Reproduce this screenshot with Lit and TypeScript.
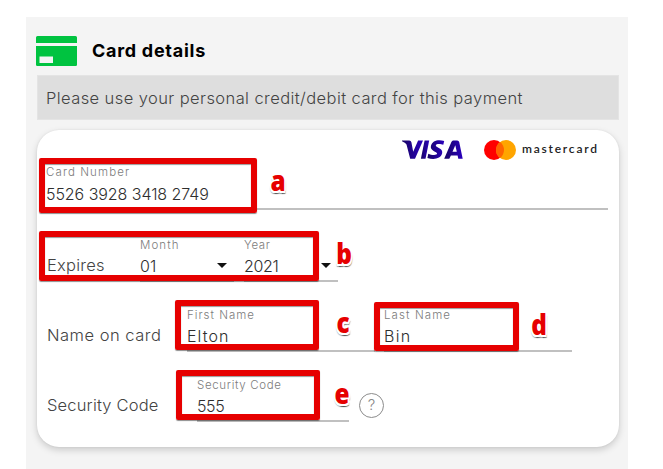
import { LitElement, html, css, svg } from "lit";
import { customElement, property } from "lit/decorators.js";

@customElement("form-field")
class FormField extends LitElement {
  @property() label = "";
  @property() value = "";
  @property({ type: Boolean }) select = false;

  static styles = css`
    :host { display: block; box-sizing: border-box; border-bottom: 2px solid #c0c0c0; position: relative; height: 46px; }
    .label { font-size: 11.5px; line-height: 16px; padding-top: var(--label-top, 1px); font-weight: 350; color: #7c7c7c; white-space: nowrap; letter-spacing: var(--label-spacing, 0.9px); }
    .value { font-size: 16px; line-height: 22px; font-weight: 350; color: #2e2e2e; margin-top: var(--value-gap, 1.5px); white-space: nowrap; letter-spacing: var(--value-spacing, 0); }
    .arrow { position: absolute; right: 7px; top: 27px; border: 5px solid transparent; border-top-color: #111; border-bottom: 0; }
  `;

  render() {
    return html`
      <div class="label">${this.label}</div>
      <div class="value">${this.value}</div>
      ${this.select ? html`<span class="arrow"></span>` : ""}
    `;
  }
}

@customElement("app-root")
class AppRoot extends LitElement {
  static styles = css`
    :host { display: block; position: relative; height: 469px; overflow: hidden; background: #fff; font-family: "Inter", "Liberation Sans", sans-serif; color: #434343; }
    * { box-sizing: border-box; }
    .panel { margin: 17px 35px 0 26px; height: 452px; background: #f4f4f4; padding: 19px 9px 0 10px; }
    .heading { display: flex; align-items: center; height: 30px; gap: 15px; }
    .heading svg { display: block; }
    h1 { margin: 0; font-size: 18px; line-height: 30px; font-weight: 700; color: #000; letter-spacing: 0.72px; }
    .notice { margin: 9px 0 0 1px; height: 45px; background: #dedede; border: 1px solid #e4e4e4; padding: 1px 0 0 8px; font-size: 16.5px; font-weight: 350; line-height: 43px; letter-spacing: 0.415px; white-space: nowrap; }
    .card { margin: 10px 0 0 1px; height: 317px; border-radius: 22px; background: #fff; box-shadow: 0 3px 7px rgba(0,0,0,.17), 0 0 2px rgba(0,0,0,.08); padding: 8px 11px 0 9px; }
    .brands { display: flex; justify-content: flex-end; height: 26px; }
    .row { display: flex; height: 46px; }
    .number { margin-bottom: 26px; --label-top: 0px; --label-spacing: 1.1px; --value-spacing: -.06px; --value-gap: 3px; }
    .number form-field { flex: 1; }
    .expires { margin-bottom: 24px; }
    .name { margin-bottom: 24px; }
    .caption { font-size: 16.5px; font-weight: 350; line-height: 22px; padding: 18px 0 0 1px; white-space: nowrap; flex: none; }
    .expires .caption { width: 94px; letter-spacing: .25px; }
    .name .caption { width: 141px; letter-spacing: .5px; }
    .security .caption { width: 151px; letter-spacing: .17px; }
    .month { width: 94px; margin-right: 10px; --label-spacing: 1.1px; }
    .year { width: 94px; --label-spacing: .6px; --value-spacing: -.3px; }
    .first { width: 188px; margin-right: 9px; --label-spacing: 1px; --value-spacing: 1.1px; }
    .last { width: 188px; --label-spacing: 1.1px; --value-spacing: 1.3px; }
    .code { width: 152px; margin-right: 10px; --label-spacing: .65px; --value-spacing: -.4px; }
    .help { width: 25px; height: 25px; border: 1.5px solid #8c8c8c; border-radius: 50%; margin-top: 17px; font-size: 15px; font-weight: 350; line-height: 22px; text-align: center; color: #888; }
    .mark { position: absolute; border: 6px solid #e60000; border-radius: 2px; box-shadow: 0 1px 1px rgba(0,0,0,.45), inset 0 1px 1px rgba(0,0,0,.4); }
    .mark-a { left: 39px; top: 158px; width: 218px; height: 55px; }
    .mark-b { left: 39px; top: 231px; width: 280px; height: 50px; }
    .mark-c { left: 175px; top: 300px; width: 144px; height: 50px; }
    .mark-d { left: 374px; top: 302px; width: 145px; height: 49px; }
    .mark-e { left: 176px; top: 370px; width: 144px; height: 50px; }
    .letter { position: absolute; width: 30px; text-align: center; font: 800 29px/30px "Open Sans", sans-serif; color: #e60000; transform: scaleX(.84);
      text-shadow: -2px 0 #fff, 2px 0 #fff, 0 -2px #fff, 0 2px #fff, 1.5px 1.5px #fff, -1.5px 1.5px #fff, 1.5px -1.5px #fff, 1.5px 2.5px 1px rgba(0,0,0,.55), -1px 2.5px 1px rgba(0,0,0,.35); }
    .letter-a { left: 263px; top: 165px; }
    .letter-b { left: 329px; top: 238px; }
    .letter-c { left: 328px; top: 307px; }
    .letter-d { left: 524px; top: 309px; }
    .letter-e { left: 327px; top: 378px; }
    .brand-name { font: 600 12px "Lato", sans-serif; }
  `;

  render() {
    const brands = svg`
      <defs><linearGradient id="visa-blue"><stop offset="0" stop-color="#180563"/><stop offset="1" stop-color="#2a00bd"/></linearGradient></defs>
      <g fill="url(#visa-blue)" transform="translate(2 2)">
        <path d="M0 .5H7.2Q9 .5 9.4 2.3L11.2 11.8L16.1.5H21L13 18.8H8.2L4.5 4.4Q4 3 0 1.3Z"/>
        <path d="M22.6.5H27.2L23.5 18.8H18.9Z"/>
        <path d="M42.2 1L41.3 4.8C38.8 3.8 34.2 3.3 33.8 5.5C33.5 7.6 41.3 8 40.2 13.1C38.9 19.2 31.2 20 25.4 17.9L26.3 13.8C29.2 15.2 34.9 15.8 35.1 13.6C35.3 11.6 27.8 11 28.9 6C30.1.2 37-.8 42.2 1Z"/>
        <path fill-rule="evenodd" d="M51.1.5H55.2Q56.8.5 57.2 2L60.7 18.8H56.3L55.6 15.4H48.9L47.3 18.8H42.2L49.4 2Q50 .5 51.1.5ZM53.3 5.2L50.5 11.7H54.8Z"/>
      </g>
      <circle cx="94" cy="12" r="10" fill="#ff0000"/>
      <circle cx="106" cy="12" r="10" fill="#ffa500"/>
      <path d="M100 4A10 10 0 0 1 100 20A10 10 0 0 1 100 4Z" fill="#ff6300"/>
      <text class="brand-name" x="122" y="15" fill="#222" textLength="75" lengthAdjust="spacing">mastercard</text>`;
    return html`
      <div class="panel">
        <div class="heading">
          <svg width="41" height="30" viewBox="0 0 41 30">
            <path fill="#00c340" d="M1.5 0H39.5Q41 0 41 1.5V7H0V1.5Q0 0 1.5 0ZM0 10H41V29Q41 30 39.5 30H1.5Q0 30 0 29Z"/>
            <path fill="#f4f4f4" d="M3.5 20.5H17V27H3.5Z"/>
          </svg>
          <h1>Card details</h1>
        </div>
        <div class="notice">Please use your personal credit/debit card for this payment</div>
        <div class="card">
          <div class="brands"><svg width="208" height="24" viewBox="0 0 208 24">${brands}</svg></div>
          <div class="row number"><form-field label="Card Number" value="5526 3928 3418 2749"></form-field></div>
          <div class="row expires">
            <div class="caption">Expires</div>
            <form-field class="month" label="Month" value="01" select></form-field>
            <form-field class="year" label="Year" value="2021" select></form-field>
          </div>
          <div class="row name">
            <div class="caption">Name on card</div>
            <form-field class="first" label="First Name" value="Elton"></form-field>
            <form-field class="last" label="Last Name" value="Bin"></form-field>
          </div>
          <div class="row security">
            <div class="caption">Security Code</div>
            <form-field class="code" label="Security Code" value="555"></form-field>
            <div class="help">?</div>
          </div>
        </div>
      </div>
      ${["a", "b", "c", "d", "e"].map(
        (id) => html`<div class="mark mark-${id}"></div><div class="letter letter-${id}">${id}</div>`
      )}
    `;
  }
}
